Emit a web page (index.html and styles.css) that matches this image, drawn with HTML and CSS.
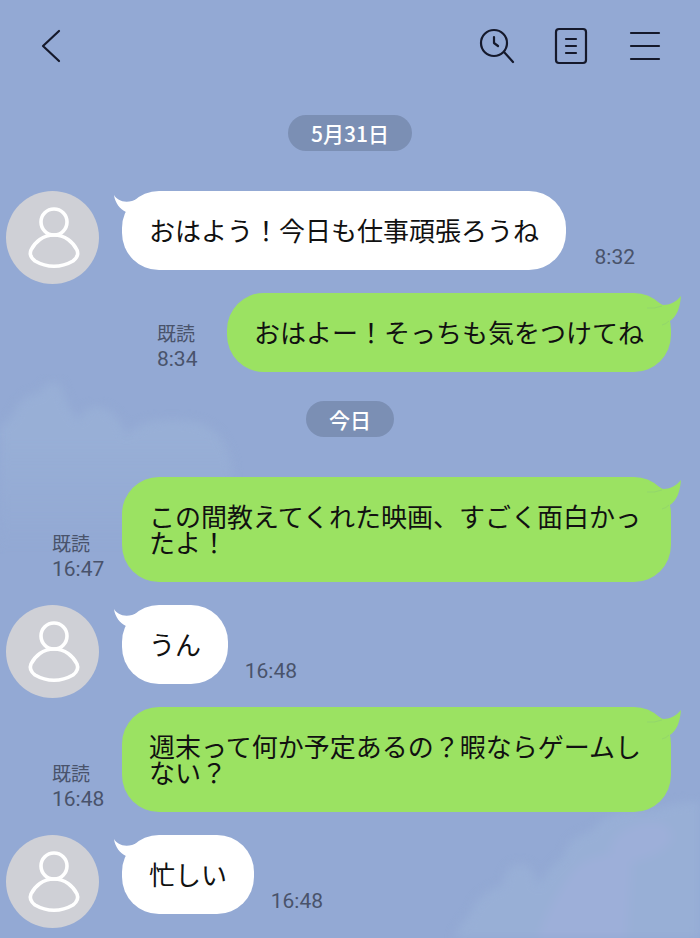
FILE: index.html
```html
<!DOCTYPE html>
<html lang="ja">
<head>
  <meta charset="UTF-8">
  <meta name="viewport" content="width=device-width, initial-scale=1.0">
  <title>トーク</title>
  <link rel="stylesheet" href="styles.css">
</head>
<body>
  <!-- shared shapes -->
  <svg class="defs" width="0" height="0" aria-hidden="true">
    <symbol id="person" viewBox="0 0 93 93">
      <circle cx="48" cy="31" r="13"/>
      <path d="M48 44 C59 44 67 51 71 59 C73 64 71 67 67 70 C55 77 41 77 29 70 C25 67 23 64 25 59 C29 51 37 44 48 44 Z"/>
    </symbol>
    <symbol id="tail-left" viewBox="0 0 28 24">
      <path d="M0 0 C3 5 9 8 18 6 L26 3 L28 24 L12 24 L12 17 C6 14 1 8 0 0 Z"/>
    </symbol>
    <symbol id="tail-right" viewBox="0 0 36 30">
      <path d="M35 0 C30 6 24 9 17 9 L9 5 L9 28 L24 28 L24 25 C31 20 34 12 35 0 Z"/>
      <path class="crease" d="M1 12 Q8 13 16 10 M16 29 Q20 28 23 25"/>
    </symbol>
  </svg>

  <svg class="cloud cloud-left" viewBox="0 0 250 200" aria-hidden="true">
    <path d="M-10 54 Q12 50 16 34 Q26 18 38 20 Q48 4 60 10 Q68 34 78 46 Q88 28 104 34 Q120 40 126 62 Q140 46 164 46 Q196 44 210 54 Q230 68 233 100 L233 200 L-10 200 Z"/>
  </svg>
  <svg class="cloud cloud-right" viewBox="0 0 250 150" aria-hidden="true">
    <path d="M0 160 Q8 138 20 126 Q28 104 52 98 Q56 76 70 76 Q84 76 88 98 Q98 80 114 68 Q118 48 140 44 Q160 18 200 22 Q230 12 260 14 L260 160 Z"/>
    <path class="haze" d="M84 160 Q96 120 122 84 Q132 70 160 66 Q160 44 190 36 Q220 30 222 50 Q216 66 182 74 L176 160 Z"/>
  </svg>

  <header class="header">
    <button class="icon-button" aria-label="戻る">
      <svg width="36" height="40" viewBox="0 0 36 40"><path d="M26 5 L10 20 L26 35"/></svg>
    </button>
    <nav class="actions">
      <button class="icon-button" aria-label="検索">
        <svg width="36" height="40" viewBox="0 0 36 40">
          <circle cx="15" cy="17" r="13"/>
          <path d="M15 11 V17 L19 20 M25 26 L34 36"/>
        </svg>
      </button>
      <button class="icon-button" aria-label="ノート">
        <svg width="36" height="40" viewBox="0 0 36 40">
          <rect x="3" y="3" width="30" height="34" rx="3"/>
          <path d="M13 13 H23 M13 20 H23 M13 27 H23"/>
        </svg>
      </button>
      <button class="icon-button" aria-label="メニュー">
        <svg width="36" height="40" viewBox="0 0 36 40"><path d="M4 7 H32 M4 20 H32 M4 33 H32"/></svg>
      </button>
    </nav>
  </header>

  <main class="chat">
    <div class="date">5月31日</div>

    <div class="message theirs">
      <svg class="avatar"><use href="#person"/></svg>
      <div class="bubble">
        <svg class="tail"><use href="#tail-left"/></svg>
        おはよう！今日も仕事頑張ろうね
      </div>
      <div class="meta"><time>8:32</time></div>
    </div>

    <div class="message mine">
      <div class="meta"><span class="read">既読</span><time>8:34</time></div>
      <div class="bubble">
        <svg class="tail"><use href="#tail-right"/></svg>
        おはよー！そっちも気をつけてね
      </div>
    </div>

    <div class="date">今日</div>

    <div class="message mine">
      <div class="meta"><span class="read">既読</span><time>16:47</time></div>
      <div class="bubble">
        <svg class="tail"><use href="#tail-right"/></svg>
        この間教えてくれた映画、すごく面白かったよ！
      </div>
    </div>

    <div class="message theirs">
      <svg class="avatar"><use href="#person"/></svg>
      <div class="bubble">
        <svg class="tail"><use href="#tail-left"/></svg>
        うん
      </div>
      <div class="meta"><time>16:48</time></div>
    </div>

    <div class="message mine">
      <div class="meta"><span class="read">既読</span><time>16:48</time></div>
      <div class="bubble">
        <svg class="tail"><use href="#tail-right"/></svg>
        週末って何か予定あるの？暇ならゲームしない？
      </div>
    </div>

    <div class="message theirs">
      <svg class="avatar"><use href="#person"/></svg>
      <div class="bubble">
        <svg class="tail"><use href="#tail-left"/></svg>
        忙しい
      </div>
      <div class="meta"><time>16:48</time></div>
    </div>
  </main>
</body>
</html>
```

FILE: styles.css
```css
* {
  box-sizing: border-box;
}

body {
  position: relative;
  margin: 0;
  min-height: 100vh;
  overflow-x: hidden;
  background-color: #93a9d4;
  font-family: "Noto Sans CJK JP", sans-serif;
  color: #111;
}

.defs {
  position: absolute;
}

/* background clouds */
.cloud {
  position: absolute;
  z-index: -1;
  width: 250px;
  fill: #98afd6;
  filter: blur(5px);
}

.cloud-left {
  top: 374px;
  left: 0;
  height: 200px;
  -webkit-mask-image: linear-gradient(#000 30%, transparent 90%);
  mask-image: linear-gradient(#000 30%, transparent 90%);
}

.cloud-right {
  right: 0;
  bottom: 0;
  height: 150px;
}

.haze {
  fill: #9dafd9;
}

/* header */
.header {
  display: flex;
  justify-content: space-between;
  align-items: center;
  padding: 26px 37px 0 33px;
}

.actions {
  display: flex;
  gap: 38px;
}

.icon-button {
  display: flex;
  padding: 0;
  border: none;
  background: none;
  cursor: pointer;
}

.icon-button svg {
  fill: none;
  stroke: #15192b;
  stroke-width: 2.2;
  stroke-linecap: round;
  stroke-linejoin: round;
}

/* messages */
.chat {
  display: flex;
  flex-direction: column;
  padding-top: 43px;
}

.date {
  align-self: center;
  margin: 6px 0 40px;
  padding: 0 23px;
  border-radius: 18px;
  background-color: #7b8fb4;
  color: #fff;
  font-size: 21px;
  font-weight: 500;
  line-height: 36px;
}

.message {
  display: flex;
}

.theirs {
  padding: 0 29px 0 6px;
  margin-bottom: 9px;
}

.mine {
  justify-content: flex-end;
  padding: 0 29px 0 52px;
  margin-bottom: 23px;
}

.avatar {
  flex-shrink: 0;
  width: 93px;
  height: 93px;
  margin-right: 23px;
  border-radius: 50%;
  background-color: #cfd0d6;
  fill: none;
  stroke: #fff;
  stroke-width: 3.6;
}

.bubble {
  position: relative;
  align-self: flex-start;
  padding: 26px 27px 27px;
  border-radius: 37px;
  font-size: 26px;
  line-height: 26px;
}

.theirs .bubble {
  background-color: #fff;
}

.mine .bubble {
  background-color: #9be262;
}

.tail {
  position: absolute;
}

.theirs .tail {
  top: 4px;
  left: -8px;
  width: 28px;
  height: 24px;
  fill: #fff;
}

.mine .tail {
  top: 3px;
  right: -11px;
  width: 36px;
  height: 30px;
  fill: #9be262;
}

.crease {
  fill: none;
  stroke: #93d66c;
}

.meta {
  display: flex;
  flex-direction: column;
  justify-content: flex-end;
  flex-shrink: 0;
  width: 70px;
  color: #49536b;
  font-size: 21px;
  line-height: 26px;
}

.meta time {
  font-family: Roboto, sans-serif;
}

.theirs .meta {
  width: 69px;
  height: 79px;
  text-align: right;
}

.read {
  font-size: 19px;
}
```
